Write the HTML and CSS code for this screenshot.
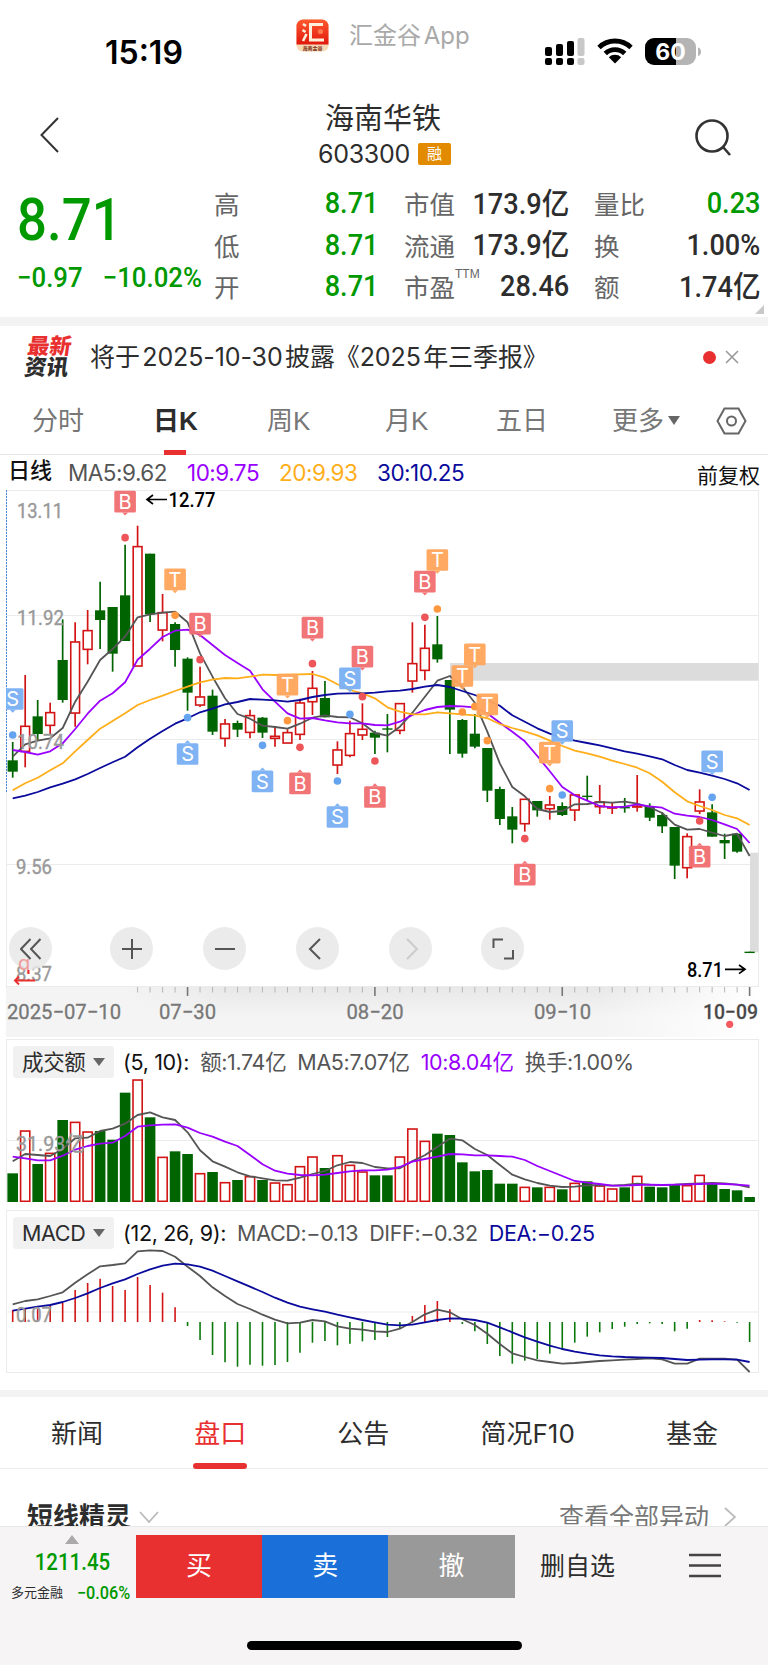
FILE: index.html
```html
<!DOCTYPE html>
<html lang="zh-CN">
<head>
    <meta charset="UTF-8">
    <meta name="viewport" content="width=device-width, initial-scale=1.0">
    <title>海南华铁 603300</title>
    <link rel="stylesheet" href="styles.css">
</head>
<body>
    <!-- 状态栏 -->
    <div class="status-bar">
        <span class="time">15:19</span>
        <div class="app-source">
            <svg width="33" height="33" viewBox="0 0 33 33">
                <defs>
                    <linearGradient id="appRed" x1="0" y1="0" x2="0" y2="1">
                        <stop offset="0" stop-color="#ff5a30"/>
                        <stop offset="1" stop-color="#e0180c"/>
                    </linearGradient>
                </defs>
                <rect x=".5" y=".5" width="32" height="32" rx="6" fill="#f6d9b5"/>
                <path d="M.5 25.500V7a6.500 6.500 0 0 1 6.500-6.500h19a6.500 6.500 0 0 1 6.500 6.500v18.500z" fill="url(#appRed)"/>
                <path d="M27 5.500H14.500v15.500H28" fill="none" stroke="#fff0dc" stroke-width="3"/>
                <path d="M7 5l3 2M6.500 11l3 2M10.500 15L7 22" fill="none" stroke="#fff0dc" stroke-width="2.600"/>
                <circle cx="24.500" cy="12.500" r="2.600" fill="#ff7a50"/>
                <text x="16.500" y="31" class="app-name">海南金谷</text>
            </svg>
            <span>汇金谷 App</span>
        </div>
        <div class="device-state">
            <svg width="40" height="28" viewBox="0 0 40 28">
                <g fill="#000">
                    <rect x="0" y="9" width="7" height="9" rx="2"/>
                    <rect x="11" y="6" width="7" height="12" rx="2"/>
                    <rect x="22" y="3" width="7" height="15" rx="2"/>
                    <rect x="0" y="20" width="7" height="7" rx="2"/>
                    <rect x="11" y="20" width="7" height="7" rx="2"/>
                    <rect x="22" y="20" width="7" height="7" rx="2"/>
                </g>
                <g fill="#c8c8c8">
                    <rect x="32.500" y="0" width="7" height="18" rx="2"/>
                    <rect x="32.500" y="20" width="7" height="7" rx="2"/>
                </g>
            </svg>
            <svg width="36" height="26" viewBox="0 0 36 26">
                <path d="M2 9.500a23 23 0 0 1 32 0M8.300 15.500a14 14 0 0 1 19.400 0" fill="none" stroke="#000" stroke-width="4.800"/>
                <path d="M11.800 19.200a9 9 0 0 1 12.400 0L18 25.500z" fill="#000"/>
            </svg>
            <svg width="57" height="28" viewBox="0 0 57 28">
                <path d="M30 0h12a9 9 0 0 1 9 9v9a9 9 0 0 1-9 9H30z" fill="#b4b4b4"/>
                <path d="M31 0H9a9 9 0 0 0-9 9v9a9 9 0 0 0 9 9h22z" fill="#000"/>
                <path d="M53 9.500c4 1 4 7.500 0 8.500z" fill="#b4b4b4"/>
                <text x="25.500" y="21.500" class="battery">60</text>
            </svg>
        </div>
    </div>

    <header>
        <svg class="back" width="20" height="36" viewBox="0 0 20 36"><path d="M18 1L1.500 18 18 35" /></svg>
        <div class="stock">
            <h1>海南华铁</h1>
            <p><span class="code">603300</span><span class="tag">融</span></p>
        </div>
        <svg class="search" width="37" height="38" viewBox="0 0 37 38"><circle cx="17" cy="17" r="15.500"/><path d="M28 28l7 8"/></svg>
    </header>

    <!-- 行情 -->
    <section class="quote">
        <div class="price">
            <strong>8.71</strong>
            <p><span>−0.97</span><span>−10.02%</span></p>
        </div>
        <dl class="col-a">
            <div><dt>高</dt><dd class="down">8.71</dd></div>
            <div><dt>低</dt><dd class="down">8.71</dd></div>
            <div><dt>开</dt><dd class="down">8.71</dd></div>
        </dl>
        <dl class="col-b">
            <div><dt>市值</dt><dd>173.9<i>亿</i></dd></div>
            <div><dt>流通</dt><dd>173.9<i>亿</i></dd></div>
            <div><dt>市盈<sup>TTM</sup></dt><dd>28.46</dd></div>
        </dl>
        <dl class="col-c">
            <div><dt>量比</dt><dd class="down">0.23</dd></div>
            <div><dt>换</dt><dd>1.00%</dd></div>
            <div><dt>额</dt><dd>1.74<i>亿</i></dd></div>
        </dl>
    </section>

    <section class="news">
        <div class="news-logo"><b>最新</b><b>资讯</b></div>
        <p>将于 2025-10-30 披露《2025 年三季报》</p>
        <i class="dot"></i>
        <svg width="14" height="14" viewBox="0 0 14 14"><path d="M1 1l12 12M13 1L1 13"/></svg>
    </section>

    <nav class="periods">
        <a>分时</a>
        <a class="active">日K</a>
        <a>周K</a>
        <a>月K</a>
        <a>五日</a>
        <a>更多<i></i></a>
        <svg width="31" height="28" viewBox="0 0 31 28"><path d="M8.500 1.500h14L29.500 14l-7 12.500h-14L1.500 14z"/><circle cx="15.500" cy="14" r="4.500"/></svg>
    </nav>

    <div class="ma-line">
        <b>日线</b>
        <span class="ma5">MA5:9.62</span>
        <span class="ma10">10:9.75</span>
        <span class="ma20">20:9.93</span>
        <span class="ma30">30:10.25</span>
        <em>前复权</em>
    </div>

    <!-- K线图 -->
    <div class="k-chart">
        <svg id="kline" width="768" height="547" viewBox="0 10 768 547"></svg>
        <div class="tools">
            <button><svg viewBox="0 0 22 22"><path d="M10.500 1L1 11l9.500 10M20.500 1L11 11l9.500 10"/></svg></button>
            <button><svg viewBox="0 0 22 22"><path d="M11 1v20M1 11h20"/></svg></button>
            <button><svg viewBox="0 0 22 22"><path d="M1 11h20"/></svg></button>
            <button><svg viewBox="0 0 22 22"><path d="M14 1L4 11l10 10"/></svg></button>
            <button class="disabled"><svg viewBox="0 0 22 22"><path d="M8 1l10 10L8 21"/></svg></button>
            <button><svg viewBox="0 0 22 22"><path d="M1.500 10V1.500H11M12 20.500h9V12"/></svg></button>
        </div>
        <svg class="ex-right" width="24" height="30" viewBox="0 0 24 30">
            <text x="5" y="15">q</text>
            <path d="M22 25.500H2M6 21.500l-4 4 4 4M15.500 15v4"/>
        </svg>
    </div>

    <div class="indicator">
        <div class="indicator-head">
            <span class="select">成交额<i></i></span>
            <b>(5, 10):</b>
            <span class="gray">额:1.74亿</span>
            <span class="gray">MA5:7.07亿</span>
            <span class="ma10">10:8.04亿</span>
            <span class="gray">换手:1.00%</span>
        </div>
        <svg id="volume" width="768" height="124" viewBox="0 48 768 124"></svg>
    </div>

    <div class="indicator macd">
        <div class="indicator-head">
            <span class="select">MACD<i></i></span>
            <b>(12, 26, 9):</b>
            <span class="gray">MACD:−0.13</span>
            <span class="gray">DIFF:−0.32</span>
            <span class="ma30">DEA:−0.25</span>
        </div>
        <svg id="macd" width="768" height="124" viewBox="0 219 768 124"></svg>
    </div>

    <nav class="info-tabs">
        <a>新闻</a>
        <a class="active">盘口</a>
        <a>公告</a>
        <a>简况F10</a>
        <a>基金</a>
    </nav>

    <section class="spirit">
        <h2>短线精灵</h2>
        <svg width="20" height="12" viewBox="0 0 20 12"><path d="M1 1l9 10 9-10"/></svg>
        <span>查看全部异动</span>
        <svg width="12" height="20" viewBox="0 0 12 20"><path d="M1 1l10 9-10 9"/></svg>
    </section>

    <footer>
        <div class="actions">
            <div class="sector">
                <i></i>
                <strong>1211.45</strong>
                <p>多元金融<span>−0.06%</span></p>
            </div>
            <a class="buy">买</a>
            <a class="sell">卖</a>
            <a class="cancel">撤</a>
            <a class="remove">删自选</a>
            <svg width="32" height="25" viewBox="0 0 32 25"><path d="M0 2h32M0 12.500h32M0 23h32"/></svg>
        </div>
        <div class="home-indicator"></div>
    </footer>

    <script src="chart.js"></script>
</body>
</html>
```
FILE: styles.css
```css
* {
    margin: 0;
    padding: 0;
    box-sizing: border-box;
}

body {
    width: 768px;
    height: 1665px;
    overflow: hidden;
    font-family: "Liberation Sans", "Noto Sans CJK SC", sans-serif;
    color: #2d2d2d;
    background-color: #fff;
}

svg {
    display: block;
    flex: none;
    fill: none;
}

i, em {
    font-style: normal;
}

/* 状态栏 */
.status-bar {
    height: 92px;
    padding-left: 105px;
    display: flex;
    align-items: flex-start;
}

.time {
    width: 191px;
    padding-top: 33px;
    font: 600 32px/39px Inter, sans-serif;
    letter-spacing: 0;
    color: #000;
}

.app-source {
    width: 249px;
    padding-top: 19px;
    display: flex;
    gap: 20px;
    font: 24px/34px Inter, "Noto Sans CJK SC", sans-serif;
    word-spacing: -4px;
    color: #a9a9a9;
    white-space: nowrap;
}

.app-name {
    font: bold 5px "Noto Sans CJK SC", sans-serif;
    fill: #7a2a10;
    text-anchor: middle;
}

.battery {
    font: bold 23px Inter, sans-serif;
    fill: #fff;
    text-anchor: middle;
}

.device-state {
    padding-top: 38px;
    display: flex;
    gap: 12px;
}

/* 标题 */
header {
    height: 88px;
    display: flex;
    justify-content: space-between;
    padding: 0 36px 0 40px;
}

.back {
    margin-top: 25px;
    stroke: #333;
    stroke-width: 2;
}

.search {
    margin-top: 27px;
    stroke: #333;
    stroke-width: 2.6;
}

.stock {
    padding-top: 9px;
    margin-left: 14px;
}

.stock h1 {
    margin-left: -3px;
    font-size: 29px;
    line-height: 36px;
    font-weight: 400;
    text-align: center;
}

.stock p {
    margin-top: -1px;
    display: flex;
    align-items: center;
    gap: 8px;
}

.code {
    font: 25px/36px Inter, sans-serif;
    letter-spacing: -0.3px;
}

.tag {
    width: 33px;
    height: 22px;
    font-size: 15px;
    line-height: 22px;
    text-align: center;
    color: #fff;
    background-color: #e28b00;
    border-radius: 2px;
}

/* 行情数据 */
.quote {
    height: 146px;
    padding: 3px 8px 0 17px;
    display: flex;
    position: relative;
    border-bottom: 9px solid #f3f3f3;
}

.quote::after {
    content: "";
    position: absolute;
    right: 4px;
    bottom: 3px;
    border-left: 9px solid transparent;
    border-bottom: 9px solid #c8c8c8;
}

.price {
    width: 197px;
    color: #090;
    font-family: Roboto, sans-serif;
}

.price strong {
    display: block;
    height: 72px;
    font-size: 60px;
    line-height: 74px;
    font-weight: 500;
    transform: scaleX(0.88);
    transform-origin: left;
}

.price p {
    display: flex;
    justify-content: space-between;
    width: 201px;
    font-size: 28px;
    line-height: 45px;
    font-weight: 500;
    transform: scaleX(0.92);
    transform-origin: left;
}

.quote dl {
    font-size: 25.5px;
}

.quote dl div {
    height: 41.5px;
    display: flex;
    justify-content: space-between;
    align-items: center;
}

.quote dt {
    color: #666;
    position: relative;
    top: -1px;
}

.quote dd {
    font: 500 29.5px/41px Roboto, "Noto Sans CJK SC", sans-serif;
    transform: scaleX(0.92);
    transform-origin: right;
}

.quote dd i {
    font-size: 30px;
}

.quote sup {
    position: absolute;
    top: 0;
    left: 51px;
    font-size: 12px;
    letter-spacing: 0;
}

.quote .down {
    color: #090;
}

.col-a {
    width: 164px;
}

.col-b {
    width: 165px;
    margin-left: 26px;
}

.col-c {
    width: 166px;
    margin-left: 25px;
}

/* 最新资讯 */
.news {
    height: 62px;
    padding: 0 29px 0 26px;
    display: flex;
    align-items: center;
}

.news-logo {
    width: 64px;
    transform: skewX(-8deg);
}

.news-logo b {
    display: block;
    font-size: 22px;
    line-height: 21px;
    font-weight: 900;
    color: #2d2d2d;
}

.news-logo b:first-child {
    color: #e93030;
}

.news p {
    flex: 1;
    font: 25px/36px Inter, "Noto Sans CJK SC", sans-serif;
    letter-spacing: -0.1px;
    word-spacing: -4.5px;
}

.news .dot {
    width: 13px;
    height: 13px;
    margin-right: 9px;
    border-radius: 50%;
    background-color: #e93030;
}

.news svg {
    stroke: #999;
    stroke-width: 1.6;
}

/* 周期切换 */
.periods {
    height: 67px;
    padding-left: 32px;
    display: grid;
    grid-template-columns: 121px 114px 118px 111px 116px 104px auto;
    border-bottom: 1px solid #e6e6e6;
}

.periods a {
    position: relative;
    justify-self: start;
    font-size: 26px;
    line-height: 67px;
    color: #777;
}

.periods .active {
    font-weight: bold;
    color: #2d2d2d;
}

.periods .active::after {
    content: "";
    position: absolute;
    left: 50%;
    bottom: 0;
    width: 22px;
    height: 5px;
    margin-left: -11px;
    background-color: #e93030;
}

.periods i {
    display: inline-block;
    margin: 0 0 5px 4px;
    border: 6px solid transparent;
    border-top: 9px solid #666;
    border-bottom: 0;
}

.periods svg {
    margin-top: 19px;
    stroke: #666;
    stroke-width: 2;
}

.ma-line {
    height: 35px;
    padding: 0 8px;
    display: grid;
    grid-template-columns: 60px 119px 92px 98px 1fr auto;
    align-items: center;
    font-size: 23.5px;
}

.ma-line b {
    font-size: 22px;
    font-weight: 500;
    color: #111;
    line-height: 32px;
    padding-bottom: 3px;
}

.ma-line span {
    padding-bottom: 1px;
    font-family: Inter, sans-serif;
    font-size: 22.5px;
    letter-spacing: -0.5px;
}

.ma-line em {
    padding-top: 2px;
    font-size: 21px;
    color: #111;
}

.ma5, .gray { color: #555; }
.ma10 { color: #90f; }
.ma20 { color: #ffae1a; }
.ma30 { color: #0a0a9c; }

/* K线图 */
.k-chart {
    position: relative;
    height: 549px;
}

.k-chart text {
    font-family: Roboto, sans-serif;
}

.label {
    font-size: 21px;
    fill: #999;
    stroke: #999;
    stroke-width: 0.4;
}

.callout {
    font-size: 21px;
    font-weight: 500;
    fill: #000;
}

.axis {
    font-size: 21px;
    fill: #777;
    stroke: #777;
    stroke-width: 0.3;
}

.axis.last {
    font-weight: 500;
    fill: #444;
}

.k-chart .marker {
    font: 20px Inter, sans-serif;
    fill: #fff;
    text-anchor: middle;
}

.tools {
    position: absolute;
    left: 9px;
    top: 437px;
    display: flex;
    gap: 49.8px;
}

.tools button {
    width: 43px;
    height: 43px;
    display: flex;
    align-items: center;
    justify-content: center;
    border: 0;
    border-radius: 50%;
    background-color: rgba(232, 232, 232, 0.85);
}

.tools button:first-child {
    margin-right: 8.5px;
}

.tools svg {
    width: 22px;
    height: 22px;
    stroke: #555;
    stroke-width: 2;
}

.tools .disabled svg {
    stroke: #ccc;
}

/* 除权标记 */
.ex-right {
    position: absolute;
    left: 13px;
    top: 465px;
    stroke: #e93030;
    stroke-width: 2;
}

.ex-right text {
    font: 20px Inter, sans-serif;
    fill: #f09a9a;
    stroke: none;
}

/* 成交额 / MACD */
.indicator {
    height: 171px;
}

.indicator.macd {
    height: 187px;
    border-bottom: 7px solid #f3f3f3;
}

.indicator-head {
    height: 39px;
    margin: 0 9px 0 6px;
    padding: 6px 0 0 6px;
    display: flex;
    border: 1px solid #ebebeb;
    border-bottom: 0;
    font: 21.5px/32px Inter, "Noto Sans CJK SC", sans-serif;
    letter-spacing: -0.35px;
    white-space: nowrap;
}

.select {
    width: 101px;
    height: 32px;
    padding: 0 9px;
    display: flex;
    justify-content: space-between;
    align-items: center;
    border-radius: 3px;
    background-color: #f1f1f1;
}

.select i {
    border: 6px solid transparent;
    border-top: 8px solid #666;
    border-bottom: 0;
}

.indicator-head b {
    margin: 0 11px 0 9px;
    font-weight: 400;
    color: #111;
}

.indicator-head b ~ span {
    margin-right: 11px;
}

/* 信息栏目 */
.info-tabs {
    height: 72px;
    padding: 0 50px 0 51px;
    display: flex;
    justify-content: space-between;
    border-bottom: 1px solid #ececec;
}

.info-tabs a {
    position: relative;
    font: 26px/74px Inter, "Noto Sans CJK SC", sans-serif;
}

.info-tabs .active {
    color: #e93030;
}

.info-tabs .active::after {
    content: "";
    position: absolute;
    left: -1px;
    bottom: -1px;
    width: 54px;
    height: 6px;
    border-radius: 3px;
    background-color: #e93030;
}

.spirit {
    height: 57px;
    padding: 29px 32px 0 27px;
    display: flex;
    align-items: flex-start;
    overflow: hidden;
}

.spirit h2 {
    width: 112px;
    font-size: 26px;
    line-height: 38px;
}

.spirit span {
    margin-left: auto;
    margin-right: 15px;
    font-size: 25px;
    line-height: 38px;
    color: #777;
}

.spirit svg {
    margin-top: 13px;
    stroke: #bbb;
    stroke-width: 1.8;
}

.spirit span + svg {
    margin-top: 9px;
}

/* 底部操作栏 */
footer {
    height: 139px;
    border-top: 1px solid #e8e6e7;
    background-color: #f6f4f5;
}

.actions {
    height: 73px;
    padding-top: 8px;
    display: flex;
}

.sector {
    width: 136px;
    display: flex;
    flex-direction: column;
    align-items: center;
    padding-left: 8px;
    font-family: Roboto, "Noto Sans CJK SC", sans-serif;
}

.sector i {
    border: 7px solid transparent;
    border-bottom: 9px solid #aaa;
    border-top: 0;
}

.sector strong {
    font-size: 23px;
    line-height: 37px;
    font-weight: 500;
    color: #090;
    transform: scaleX(0.89);
}

.sector p {
    display: flex;
    align-items: center;
    gap: 11px;
    font-size: 13px;
    line-height: 24px;
    white-space: nowrap;
}

.sector span {
    font-size: 18px;
    font-weight: 500;
    color: #090;
    transform: scaleX(0.9);
}

.actions a {
    height: 63px;
    font-size: 26px;
    line-height: 63px;
    text-align: center;
}

.buy, .sell, .cancel {
    width: 126.2px;
    color: #fff;
}

.buy { background-color: #e93030; }
.sell { background-color: #1a70d8; }
.cancel { background-color: #999; }

.actions .remove {
    width: 126px;
    font-size: 25px;
}

.actions svg {
    margin: 18px 0 0 48px;
    stroke: #444;
    stroke-width: 2.6;
}

.home-indicator {
    width: 275px;
    height: 9px;
    margin: 41px auto 0;
    border-radius: 5px;
    background-color: #000;
}
```
FILE: chart.js
```js
// 数据单位为 1/3 像素
// [涨跌, 最高, 实体上沿, 实体下沿, 最低]
const candles = [
    ['g', 786, 841, 875, 893], ['r', 585, 738, 815, 862], ['g', 660, 709, 762, 780], ['r', 668, 697, 737, 765],
    ['g', 418, 540, 660, 668], ['r', 427, 485, 700, 740], ['r', 390, 451, 509, 553], ['g', 305, 391, 420, 507],
    ['g', 381, 381, 521, 575], ['g', 194, 346, 483, 483], ['r', 137, 199, 559, 559], ['g', 221, 221, 403, 426],
    ['r', 342, 397, 451, 484], ['g', 427, 432, 510, 560], ['g', 532, 536, 638, 692], ['r', 560, 650, 676, 681],
    ['g', 629, 647, 755, 765], ['r', 717, 731, 776, 800], ['g', 722, 729, 749, 771], ['r', 689, 706, 758, 775],
    ['g', 711, 713, 758, 774], ['r', 738, 768, 776, 800], ['r', 748, 757, 790, 790], ['r', 656, 668, 764, 780],
    ['r', 573, 624, 666, 705], ['g', 603, 654, 712, 712], ['r', 784, 809, 856, 882], ['r', 722, 760, 827, 832],
    ['r', 670, 747, 766, 780], ['g', 752, 758, 773, 822], ['g', 702, 745, 749, 817], ['r', 670, 670, 752, 763],
    ['r', 427, 550, 604, 638], ['r', 434, 504, 572, 601], ['g', 408, 493, 538, 548], ['g', 600, 600, 689, 822],
    ['g', 717, 720, 821, 833], ['g', 702, 761, 800, 805], ['g', 804, 804, 932, 966], ['g', 920, 927, 1017, 1035],
    ['g', 981, 1009, 1049, 1090], ['r', 957, 957, 1032, 1055], ['g', 963, 963, 991, 1010], ['r', 948, 974, 987, 1019],
    ['g', 967, 978, 1005, 1008], ['r', 944, 944, 991, 1023], ['g', 887, 947, 951, 960], ['r', 915, 965, 981, 1002],
    ['r', 969, 981, 985, 1002], ['g', 954, 981, 985, 998], ['r', 885, 978, 982, 995], ['g', 970, 978, 1013, 1023],
    ['g', 997, 1005, 1039, 1059], ['g', 1041, 1041, 1157, 1197], ['r', 1060, 1069, 1164, 1195], ['r', 928, 965, 994, 1002],
    ['g', 973, 997, 1070, 1070], ['g', 1061, 1080, 1090, 1137], ['g', 1061, 1061, 1115, 1118], ['g', 1415, 1415, 1419, 1419]
];

const ma = {
    '#555': [830, 793, 782, 775, 744, 665, 605, 540, 507, 470, 412, 403, 398, 395, 427, 520, 590, 655, 702, 716, 737, 741, 746, 731, 713, 706, 711, 712, 730, 759, 767, 740, 698, 650, 602, 588, 620, 668, 755, 850, 921, 949, 987, 996, 993, 973, 972, 966, 968, 965, 971, 982, 999, 1034, 1049, 1047, 1058, 1068, 1061, 1128],
    '#90f': [810, 816, 824, 814, 790, 747, 701, 662, 640, 607, 539, 506, 471, 452, 449, 465, 495, 525, 549, 572, 628, 665, 700, 716, 714, 721, 727, 730, 730, 735, 736, 725, 705, 690, 681, 678, 679, 682, 700, 728, 755, 784, 828, 874, 921, 946, 962, 978, 982, 980, 973, 979, 983, 1001, 1007, 1011, 1020, 1033, 1047, 1089],
    '#ffae1a': [931, 910, 893, 871, 850, 814, 780, 746, 723, 700, 675, 660, 647, 633, 620, 607, 599, 594, 595, 590, 584, 585, 584, 583, 582, 593, 613, 630, 640, 655, 682, 695, 703, 703, 697, 700, 703, 706, 715, 732, 744, 754, 766, 782, 798, 812, 820, 830, 842, 852, 863, 880, 905, 937, 964, 978, 990, 1005, 1015, 1035],
    '#0a0a9c': [955, 947, 936, 922, 911, 898, 882, 864, 847, 830, 802, 776, 753, 731, 715, 697, 686, 673, 666, 657, 659, 661, 665, 660, 651, 645, 641, 640, 640, 638, 634, 632, 627, 620, 615, 621, 633, 645, 660, 677, 706, 725, 745, 761, 773, 782, 789, 796, 805, 814, 821, 829, 838, 855, 870, 878, 887, 897, 910, 930]
};

// 买卖点 [序号, 字母, 标签中心, 圆点]
const markers = [
    [0, 'S', 657, 765], [9, 'B', 65, 173], [13, 'T', 298, 406], [15, 'B', 431, 539], [14, 'S', 822, 713],
    [20, 'S', 904, 796], [22, 'T', 614, 722], [23, 'B', 910, 802], [24, 'B', 443, 551], [26, 'S', 1011, 903],
    [28, 'B', 530, 650], [27, 'S', 595, 703], [29, 'B', 951, 843], [33, 'B', 305, 412], [34, 'T', 240, 387],
    [37, 'T', 523, 680], [36, 'T', 588, 696], [38, 'T', 673, 782], [41, 'B', 1184, 1076], [44, 'S', 753, 945],
    [43, 'T', 818, 926], [55, 'B', 1130, 1023], [56, 'S', 844, 952]
];
const markerColor = { B: ['#f06e70', '#ee5558'], S: ['#7bb0f2', '#64a3ef'], T: ['#ffa65c', '#ff983f'] };

const volumes = [430, 301, 402, 368, 270, 275, 304, 303, 329, 188, 148, 262, 380, 364, 372, 429, 426, 456, 450, 438, 450, 457, 462, 408, 379, 414, 375, 404, 424, 436, 436, 379, 295, 332, 311, 315, 397, 424, 420, 461, 461, 470, 472, 470, 478, 458, 454, 466, 475, 472, 437, 470, 472, 465, 465, 434, 462, 477, 481, 501];
const volumeMa = {
    '#555': [394, 372, 375, 378, 357, 325, 323, 303, 296, 281, 255, 247, 262, 270, 307, 361, 394, 410, 427, 439, 445, 451, 452, 443, 432, 423, 406, 396, 399, 411, 415, 415, 393, 376, 350, 326, 331, 357, 375, 405, 434, 448, 459, 467, 471, 470, 466, 465, 467, 465, 461, 464, 465, 464, 462, 460, 459, 460, 464, 472],
    '#90f': [380, 385, 391, 391, 377, 359, 348, 341, 338, 318, 290, 286, 284, 283, 293, 309, 320, 335, 348, 375, 403, 422, 431, 435, 436, 434, 429, 424, 421, 421, 419, 411, 395, 387, 380, 372, 373, 376, 376, 378, 380, 390, 408, 423, 438, 453, 458, 462, 467, 467, 465, 464, 465, 464, 463, 462, 461, 462, 464, 467]
};

const macdBars = [840, 838, 835, 826, 818, 780, 759, 746, 768, 780, 741, 765, 788, 832, 888, 930, 975, 997, 1010, 1004, 1007, 1005, 996, 968, 938, 933, 946, 941, 934, 930, 921, 896, 858, 825, 813, 838, 882, 904, 942, 978, 1001, 992, 987, 971, 960, 938, 920, 907, 897, 890, 882, 880, 882, 904, 896, 870, 871, 874, 878, 936];
const macdLines = {
    '#555': [823, 813, 808, 798, 787, 758, 733, 709, 705, 700, 664, 661, 663, 680, 710, 738, 772, 798, 822, 837, 854, 869, 880, 878, 870, 874, 889, 896, 899, 904, 906, 896, 876, 853, 839, 847, 868, 885, 911, 942, 970, 981, 991, 996, 1001, 999, 996, 993, 991, 989, 987, 985, 988, 1001, 1001, 986, 986, 986, 989, 1026],
    '#0a0a9c': [842, 836, 830, 825, 816, 804, 790, 774, 760, 748, 732, 718, 707, 701, 703, 710, 722, 738, 754, 770, 786, 803, 818, 830, 838, 845, 854, 862, 870, 877, 884, 886, 884, 877, 870, 865, 866, 870, 878, 892, 907, 922, 935, 947, 957, 965, 971, 976, 979, 981, 982, 983, 984, 987, 990, 989, 988, 988, 989, 996]
};

const GREEN = '#006400';
const RED = '#d21414';
const px = i => 12.7 + 12.49 * i;

function line(x1, y1, x2, y2, color, width = 1) {
    return `<line x1="${x1}" y1="${y1}" x2="${x2}" y2="${y2}" stroke="${color}" stroke-width="${width}"/>`;
}

function rect(x, y, w, h, fill) {
    return `<rect x="${x}" y="${y}" width="${w}" height="${h}" fill="${fill}"/>`;
}

function text(x, y, str, cls, width) {
    return `<text x="${x}" y="${y}" class="${cls}" textLength="${width}" lengthAdjust="spacingAndGlyphs">${str}</text>`;
}

function curves(group) {
    return Object.entries(group).map(([color, ys]) => {
        const pts = ys.map((y, i) => `${px(i).toFixed(1)},${(y / 3).toFixed(1)}`).join(' ');
        return `<polyline points="${pts}" stroke="${color}" stroke-width="1.8" stroke-linejoin="round"/>`;
    }).join('');
}

function drawCandle([type, high, top, bottom, low], i) {
    const x = px(i);
    if (type === 'g') {
        return line(x, high / 3, x, low / 3, GREEN, 1.7) +
            rect(x - 5.1, top / 3, 10.2, Math.max((bottom - top) / 3, 1.4), GREEN);
    }
    return line(x, high / 3, x, top / 3, RED, 1.7) + line(x, bottom / 3, x, low / 3, RED, 1.7) +
        `<rect x="${x - 4.4}" y="${top / 3 + .3}" width="8.800" height="${Math.max((bottom - top) / 3 - .6, .6)}" stroke="${RED}" stroke-width="1.6"/>`;
}

function drawMarker([i, letter, center, dot]) {
    const x = px(i);
    const y = center / 3;
    const [box, point] = markerColor[letter];
    const dir = dot > center ? 1 : -1;
    return `<circle cx="${x}" cy="${dot / 3}" r="3.800" fill="${point}"/>` +
        `<g fill="${box}" fill-opacity=".96"><rect x="${x - 10.8}" y="${y - 10.8}" width="21.600" height="21.600" rx="1.500"/>` +
        `<path d="M${x - 3} ${y + dir * 10.8}h6l-3 ${dir * 3}z"/></g>` +
        `<text x="${x}" y="${y + 7.2}" class="marker">${letter}</text>`;
}

function drawKline() {
    let s = `<defs><linearGradient id="axisBg" x1="0" y1="0" x2="0" y2="1">
        <stop offset="0" stop-color="#e8e8e8"/><stop offset=".6" stop-color="#f4f4f4"/></linearGradient>
        <linearGradient id="fadeLeft"><stop offset="0" stop-color="#f4f4f4"/><stop offset="1" stop-color="#f4f4f4" stop-opacity="0"/></linearGradient>
        <linearGradient id="fadeRight"><stop offset="0" stop-color="#fff" stop-opacity="0"/><stop offset="1" stop-color="#fff"/></linearGradient>
        <clipPath id="plot"><rect x="6" y="10" width="754" height="500"/></clipPath></defs>`;
    s += rect(6, 507, 752, 50, 'url(#axisBg)');
    s += rect(6, 507, 120, 50, '#f4f4f4') + rect(126, 507, 100, 50, 'url(#fadeLeft)');
    s += rect(600, 507, 158, 50, 'url(#fadeRight)');
    [10.5, 135.5, 259.5, 384.5, 506.5].forEach(y => s += line(7, y, 758, y, '#ebebeb'));
    s += line(6.5, 10, 6.5, 507, '#ebebeb') + line(758.5, 10, 758.5, 507, '#ebebeb');
    s += `<line x1="6.500" y1="10" x2="6.500" y2="312" stroke="#4a86d8" stroke-dasharray="2 1"/>`;
    s += rect(450, 183, 308.5, 17.7, '#dcdcdc') + rect(750, 372.7, 8.5, 99.6, '#dcdcdc');

    // 时间刻度
    for (let i = 10; i < 60; i++) {
        const major = i % 15 === 14;
        s += line(px(i), 507, px(i), major ? 516 : 512.5, major ? '#777' : '#b5b5b5', major ? 1.6 : 1);
    }
    s += text(7, 538.5, '2025−07−10', 'axis', 114);
    s += text(159, 538.5, '07−30', 'axis', 57);
    s += text(346.5, 538.5, '08−20', 'axis', 57);
    s += text(534, 538.5, '09−10', 'axis', 57);
    s += text(703, 538.5, '10−09', 'axis last', 55);
    s += '<circle cx="729.700" cy="544.300" r="3.600" fill="#f55a5e"/>';

    s += '<g clip-path="url(#plot)">' + candles.map(drawCandle).join('') + curves(ma) + '</g>';
    s += text(17, 37.5, '13.11', 'label', 46);
    s += text(17, 144.5, '11.92', 'label', 47);
    s += text(17, 269, '10.74', 'label', 47);
    s += text(16, 393.5, '9.56', 'label', 36);
    s += text(16, 500.5, '8.37', 'label', 36);
    s += '<g clip-path="url(#plot)">' + markers.map(drawMarker).join('') + '</g>';

    // 最高、最低价标注
    s += `<path d="M167 19.500h-19M153 15l-6 4.500 6 4.500" stroke="#000" stroke-width="1.700"/>`;
    s += text(168.5, 27, '12.77', 'callout', 47);
    s += text(687, 496.5, '8.71', 'callout', 36);
    s += `<path d="M725 489.300h19M739 485l6 4.300-6 4.300" stroke="#000" stroke-width="1.700"/>`;
    document.getElementById('kline').innerHTML = s;
}

function drawVolume() {
    let s = line(7, 110.5, 758, 110.5, '#ebebeb') + line(6.5, 48, 6.5, 172, '#ebebeb') + line(758.5, 48, 758.5, 172, '#ebebeb');
    volumes.forEach((v, i) => {
        const top = v / 3;
        const h = 172 - top;
        if (candles[i][0] === 'g') {
            s += rect(px(i) - 5.3, top, 10.6, h, GREEN);
        } else {
            s += `<rect x="${px(i) - 4.6}" y="${top + .7}" width="9.200" height="${h - 1.4}" stroke="${RED}" stroke-width="1.6"/>`;
        }
    });
    s += curves(volumeMa) + '<text x="16" y="120.500" class="label" font-family="Roboto, Noto Sans CJK SC, sans-serif" textLength="69" lengthAdjust="spacingAndGlyphs">31.93亿</text>';
    document.getElementById('volume').innerHTML = s;
}

function drawMacd() {
    let s = line(7, 282, 758, 282, '#ebebeb') + line(7, 342.5, 758, 342.5, '#ebebeb');
    s += line(6.5, 219, 6.5, 343, '#ebebeb') + line(758.5, 219, 758.5, 343, '#ebebeb');
    macdBars.forEach((v, i) => {
        s += line(px(i), 292, px(i), v / 3, v < 876 ? RED : '#0a780a', 1.6);
    });
    s += curves(macdLines) + '<text x="16" y="291.500" class="label" font-family="Roboto, sans-serif" textLength="36" lengthAdjust="spacingAndGlyphs">0.07</text>';
    document.getElementById('macd').innerHTML = s;
}

drawKline();
drawVolume();
drawMacd();
```
